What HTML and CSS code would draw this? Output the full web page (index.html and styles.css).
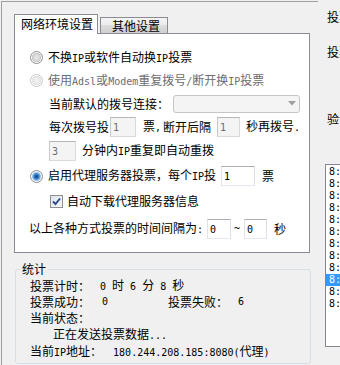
FILE: index.html
```html
<!DOCTYPE html>
<html>
<head>
<meta charset="utf-8">
<title>投票设置</title>
<link rel="stylesheet" href="styles.css">
</head>
<body>
<div class="app">
  <div class="main">
    <div class="tabs">
      <div class="tab active">网络环境设置</div>
      <div class="tab">其他设置</div>
    </div>
    <div class="panel">
      <div class="row r1 in-radio"><span class="radio"></span><span class="rtxt">不换<span class="m">IP</span>或软件自动换<span class="m">IP</span>投票</span></div>
      <div class="row r2 in-radio dis"><span class="radio off"></span><span class="rtxt">使用<span class="m">Adsl</span>或<span class="m">Modem</span>重复拨号<span class="m">/</span>断开换<span class="m">IP</span>投票</span></div>
      <div class="row r3 in-sub"><span>当前默认的拨号连接：</span><div class="combo"><svg width="8" height="5" viewBox="0 0 8 5"><path d="M0 0H8L4 4.5Z" fill="#a0a0a0"/></svg></div></div>
      <div class="row r4 in-sub"><span>每次拨号投</span><input class="tb off w26 g1" type="text" value="1" disabled><span class="g7">票<span class="m">,</span></span><span class="g2">断开后隔</span><input class="tb off w23 g6" type="text" value="1" disabled><span class="g6">秒再拨号<span class="m">.</span></span></div>
      <div class="row r5 in-sub"><input class="tb off w27" type="text" value="3" disabled><span class="g6">分钟内<span class="m">IP</span>重复即自动重拨</span></div>
      <div class="row r6 in-radio"><span class="radio on"></span><span class="rtxt">启用代理服务器投票，每个<span class="m">IP</span>投</span><input class="tb w34 g5" type="text" value="1"><span class="g7">票</span></div>
      <div class="row r7 in-chk"><span class="chk"><svg width="11" height="11" viewBox="0 0 11 11"><path d="M2 5.5L4.5 8L9 2.5" fill="none" stroke="#2b4a8e" stroke-width="1.9"/></svg></span><span class="g4">自动下载代理服务器信息</span></div>
      <div class="row r8 in-int"><span>以上各种方式投票的时间间隔为<span class="m">:</span></span><input class="tb w24 g4" type="text" value="0"><span class="m tilde">~</span><input class="tb w23 g4" type="text" value="0"><span class="g7">秒</span></div>
    </div>
    <fieldset class="stats">
      <legend>统计</legend>
      <div class="sbody">
        <div class="srow h16"><span class="lab">投票计时：</span><span><span class="m">0 </span>时<span class="m"> 6 </span>分<span class="m"> 8 </span>秒</span></div>
        <div class="srow h16"><span class="lab">投票成功：</span><span class="m v1">0</span><span class="lab">投票失败：</span><span class="m">6</span></div>
        <div class="srow h16"><span>当前状态：</span></div>
        <div class="srow h17 status"><span>正在发送投票数据<span class="m">...</span></span></div>
        <div class="srow h18"><span>当前<span class="m">IP</span>地址：</span><span class="ip"><span class="m">180.244.208.185:8080(</span>代理<span class="m">)</span></span></div>
      </div>
    </fieldset>
  </div>
  <div class="side">
    <div class="lbl l1">投票网址：</div>
    <div class="lbl l2">投票选项：</div>
    <div class="lbl l3">验证码：</div>
    <div class="list">
      <div class="item">8:06:01 成功</div>
      <div class="item">8:06:02 成功</div>
      <div class="item">8:06:03 成功</div>
      <div class="item">8:06:04 成功</div>
      <div class="item">8:06:05 成功</div>
      <div class="item">8:06:06 成功</div>
      <div class="item">8:06:07 成功</div>
      <div class="item">8:06:07 成功</div>
      <div class="item">8:06:08 成功</div>
      <div class="item sel">8:06:08 发送</div>
      <div class="item">8:06:08 连接</div>
      <div class="item">8:06:08 连接</div>
    </div>
  </div>
</div>
</body>
</html>
```
FILE: styles.css
```css
* { box-sizing: border-box; }
html, body { margin: 0; padding: 0; }
body {
  width: 340px;
  height: 365px;
  overflow: hidden;
  background: #f0f0f0;
  font-family: "Noto Sans CJK SC", "Noto Sans", sans-serif;
  font-size: 12px;
  line-height: 14px;
  color: #000;
}
.m { font-family: "DejaVu Sans Mono", "Liberation Mono", monospace; font-size: 10px; }
.app { display: flex; height: 365px; }
.main {
  flex: 0 0 auto;
  width: 317px;
  margin: 1px 0 0 1px;
  border-top: 1px solid #a0a0a0;
  border-left: 1px solid #a0a0a0;
}
.tabs { display: flex; align-items: flex-end; height: 19px; margin: 12px 0 0 12px; }
.tab {
  border: 1px solid #898c95;
  border-bottom: 0;
  white-space: nowrap;
}
.tab.active {
  position: relative;
  z-index: 1;
  height: 20px;
  margin-bottom: -1px;
  padding: 0 4px 0 6px;
  line-height: 18px;
  background: #fff;
}
.tab:not(.active) {
  height: 16px;
  width: 68px;
  margin-left: 2px;
  padding: 0 0 0 11px;
  line-height: 15px;
  background: linear-gradient(#f4f4f4, #ececec 45%, #dddddd 50%, #cfcfcf);
}
.panel {
  width: 296px;
  height: 220px;
  margin-left: 12px;
  padding-top: 12px;
  border: 1px solid #898c95;
  background: #fff;
}
.row { display: flex; align-items: center; height: 23px; white-space: nowrap; }
.r4, .r5, .r7 { height: 24px; }
.r6 { height: 26px; }
.r8 { height: 32px; }
.in-radio { padding-left: 15px; }
.in-sub { padding-left: 34px; }
.in-chk { padding-left: 35px; }
.in-int { padding-left: 14px; }
.dis { color: #6d6d6d; }
.rtxt { margin-left: 5px; }
.radio {
  flex: 0 0 auto;
  width: 13px;
  height: 13px;
  border-radius: 50%;
  border: 1px solid #8e8f8f;
  background: radial-gradient(circle, #e9e9e9 0, #d9d9d9 3px, #c6c6c6 4.4px, #fdfdfd 5px);
}
.radio.off {
  border-color: #c8c8c8;
  background: radial-gradient(circle, #f3f3f3 0, #eaeaea 3px, #e0e0e0 4.4px, #fdfdfd 5px);
}
.radio.on {
  background: radial-gradient(circle, #0c3f7c 0, #2b73c2 2px, #6ea8e0 3.4px, #b9d6f2 4.4px, #f4f8fc 5px);
}
.chk {
  flex: 0 0 auto;
  display: flex;
  align-items: center;
  justify-content: center;
  width: 13px;
  height: 13px;
  border: 1px solid #8e8f8f;
  background: linear-gradient(135deg, #dfe3ef, #f6f7fb);
}
.combo {
  display: flex;
  align-items: center;
  justify-content: flex-end;
  width: 127px;
  height: 18px;
  margin-left: 4px;
  padding-right: 3px;
  border: 1px solid #c6c6c6;
  border-radius: 3px;
  background: #f4f4f4;
}
.tb {
  height: 20px;
  margin: 0;
  padding: 0 0 0 2px;
  border: 1px solid #abadb3;
  border-color: #abadb3 #dbdfe6 #e3e9ef #e2e3ea;
  background: #fff;
  color: #000;
  font-family: "DejaVu Sans Mono", "Liberation Mono", monospace;
  font-size: 10px;
  outline: none;
}
.tb.off { background: #f4f4f4; color: #6d6d6d; border-color: #b6b6b6 #dadada #dadada #c8c8c8; }
.w23 { width: 23px; }
.w24 { width: 24px; }
.w26 { width: 26px; }
.w27 { width: 27px; }
.w34 { width: 34px; }
.g1 { margin-left: 1px; }
.g2 { margin-left: 2px; }
.g4 { margin-left: 4px; }
.g5 { margin-left: 5px; }
.g6 { margin-left: 6px; }
.g7 { margin-left: 7px; }
.tilde { margin-left: 3px; }
.stats {
  width: 296px;
  margin: 9px 0 0 13px;
  padding: 0 0 2px 0;
  min-width: 0;
  border: 1px solid #d5dfe5;
  border-radius: 3px;
}
.stats legend {
  margin-left: 4px;
  padding: 0 2px;
  line-height: 14px;
}
.sbody { padding: 2px 0 0 14px; }
.srow { display: flex; align-items: center; white-space: nowrap; }
.h16 { height: 16px; }
.h17 { height: 17px; }
.h18 { height: 18px; }
.lab { display: inline-block; width: 70px; }
.v1 { display: inline-block; width: 68px; padding-left: 2px; }
.status { padding-left: 23px; }
.ip { margin-left: 11px; }
.side { flex: 1 1 auto; min-width: 0; margin-left: 7px; overflow: hidden; }
.lbl { padding-left: 2px; white-space: nowrap; }
.l1 { margin-top: 10px; }
.l2 { margin-top: 21px; }
.l3 { margin-top: 53px; }
.list {
  width: 80px;
  height: 183px;
  margin-top: 38px;
  padding-top: 1px;
  border: 1px solid #828790;
  background: #fff;
}
.item {
  height: 12px;
  padding-left: 3px;
  line-height: 12px;
  font-family: "DejaVu Sans Mono", "Liberation Mono", "Noto Sans CJK SC", monospace;
  font-size: 10px;
  white-space: nowrap;
}
.item.sel { background: #3399ff; color: #fff; }
```
